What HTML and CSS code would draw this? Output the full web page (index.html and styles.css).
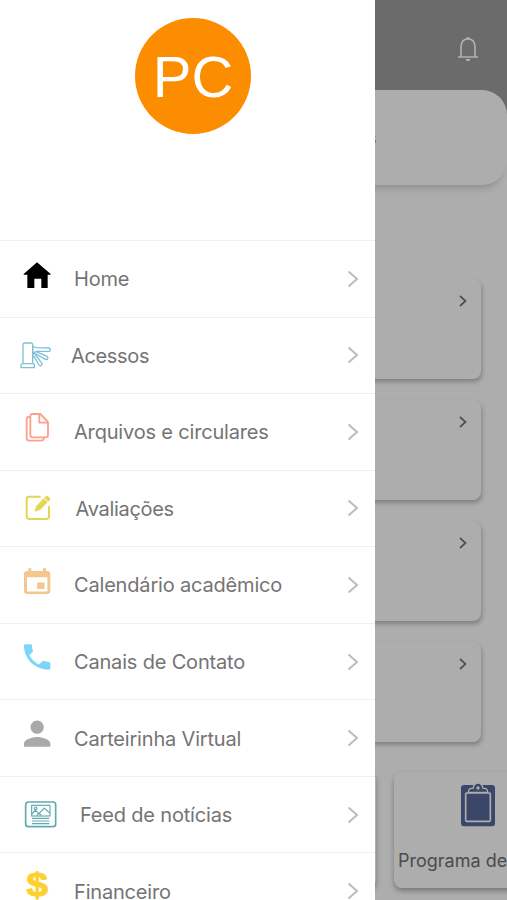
FILE: index.html
```
<!DOCTYPE html>
<html lang="pt-BR">
<head>
	<meta charset="UTF-8">
	<title>Menu</title>
	<link rel="stylesheet" href="styles.css">
</head>
<body>
	<main class="page">
		<header class="topbar">
			<svg class="bell" viewBox="0 0 66 78">
				<path d="M3 63H63M12 62V34C12 18 20 9 33 9S54 18 54 34V62"/>
				<path class="solid" d="M27 9a6 6 0 0 1 12 0zM26 69h14a7 7 0 0 1-14 0z"/>
			</svg>
		</header>
		<section class="welcome"><span>s</span></section>
		<section class="cards">
			<div class="card"><svg class="next" viewBox="0 0 8 12"><path d="M1 1l5.5 5L1 11"/></svg></div>
			<div class="card"><svg class="next" viewBox="0 0 8 12"><path d="M1 1l5.5 5L1 11"/></svg></div>
			<div class="card"><svg class="next" viewBox="0 0 8 12"><path d="M1 1l5.5 5L1 11"/></svg></div>
			<div class="card"><svg class="next" viewBox="0 0 8 12"><path d="M1 1l5.5 5L1 11"/></svg></div>
		</section>
		<section class="tiles">
			<div class="tile"></div>
			<div class="tile">
				<svg class="clipboard" viewBox="0 0 102 132">
					<rect class="board" x="0" y="6" width="102" height="124" rx="9"/>
					<rect class="sheet" x="14" y="30" width="74" height="85" rx="3"/>
					<path class="clip" d="M22 28q0-12 10-12h4Q39 0 51 0t15 16h4q10 0 10 12z"/>
					<circle class="hole" cx="51" cy="15" r="5"/>
				</svg>
				<span class="tile-name">Programa de</span>
			</div>
		</section>
	</main>

	<aside class="drawer">
		<div class="profile">
			<div class="avatar">PC</div>
		</div>
		<ul class="menu">
			<li>
				<svg class="icon" viewBox="0 0 108 108"><path d="M51 4L92 39V41H83V81H64V53H43V81H22V41H11V39z" fill="#000"/></svg>
				<a href="#">Home</a>
				<svg class="arrow" viewBox="0 0 12 18"><path d="M1.5 1.5l8.5 7.5-8.5 7.5"/></svg>
			</li>
			<li class="near">
				<svg class="icon" viewBox="0 0 108 108">
					<g fill="none" stroke="#7fc0d5" stroke-width="4" stroke-linejoin="round">
						<path d="M9 80V23q0-5 5-5h19q5 0 5 5V80zM8 80H38q5 0 5 5v7H3v-7q0-5 5-5z"/>
						<path d="M38 29l12 3 37 1q4 0 4 5t-4 5H50l-12 5z"/>
						<path d="M49 44l32 14q4 3 2 7t-7 2L43 48"/>
						<path d="M38 49l6 1 22 30q1 5-3 6t-6-2L42 58l-4 3z"/>
					</g>
				</svg>
				<a href="#">Acessos</a>
				<svg class="arrow" viewBox="0 0 12 18"><path d="M1.5 1.5l8.5 7.5-8.5 7.5"/></svg>
			</li>
			<li>
				<svg class="icon" viewBox="0 0 108 108">
					<g fill="none" stroke="#fba28d" stroke-width="5.5" stroke-linejoin="round">
						<path d="M38 0H61L84 24V63Q84 70 77 70H38Q31 70 31 63V7Q31 0 38 0z"/>
						<path d="M58 1V26H84M31 9H27Q20 9 20 16V72Q20 80 28 80H64Q71 80 72 71"/>
					</g>
				</svg>
				<a href="#">Arquivos e circulares</a>
				<svg class="arrow" viewBox="0 0 12 18"><path d="M1.5 1.5l8.5 7.5-8.5 7.5"/></svg>
			</li>
			<li class="mid">
				<svg class="icon" viewBox="0 0 108 108">
					<path d="M62 20H28Q20 20 20 28V79Q20 87 28 87H79Q87 87 87 79V48" fill="none" stroke="#e2d653" stroke-width="6"/>
					<path d="M44 65L48 49 71 25 83 37 60 60zM73 23l5-5q3-2 6 1l6 6q2 3 0 5l-5 5z" fill="#e2d653"/>
				</svg>
				<a href="#">Avaliações</a>
				<svg class="arrow" viewBox="0 0 12 18"><path d="M1.5 1.5l8.5 7.5-8.5 7.5"/></svg>
			</li>
			<li>
				<svg class="icon" viewBox="0 0 108 108"><path transform="translate(-1.2 .2) scale(4.39 3.85)" fill="#f5c68d" d="M17 12h-5v5h5v-5zM16 1v2H8V1H6v2H5c-1.11 0-1.99.9-1.99 2L3 19c0 1.1.89 2 2 2h14c1.1 0 2-.9 2-2V5c0-1.1-.9-2-2-2h-1V1h-2zm3 18H5V8h14v11z"/></svg>
				<a href="#">Calendário acadêmico</a>
				<svg class="arrow" viewBox="0 0 12 18"><path d="M1.5 1.5l8.5 7.5-8.5 7.5"/></svg>
			</li>
			<li>
				<svg class="icon" viewBox="0 0 108 108"><path transform="translate(-1.2 -11.7) scale(4.39 4.22)" fill="#7cd6f8" d="M6.62 10.79c1.44 2.83 3.76 5.14 6.59 6.59l2.2-2.2c.27-.27.67-.36 1.02-.24 1.12.37 2.33.57 3.57.57.55 0 1 .45 1 1V20c0 .55-.45 1-1 1-9.39 0-17-7.61-17-17 0-.55.45-1 1-1h3.5c.55 0 1 .45 1 1 0 1.25.2 2.45.57 3.57.11.35.03.74-.25 1.02l-2.2 2.2z"/></svg>
				<a href="#">Canais de Contato</a>
				<svg class="arrow" viewBox="0 0 12 18"><path d="M1.5 1.5l8.5 7.5-8.5 7.5"/></svg>
			</li>
			<li>
				<svg class="icon" viewBox="0 0 108 108"><path transform="translate(-7.8 -17.8) scale(4.94 4.9)" fill="#a9a9a9" d="M12 12c2.21 0 4-1.79 4-4s-1.79-4-4-4-4 1.79-4 4 1.79 4 4 4zm0 2c-2.67 0-8 1.34-8 4v2h16v-2c0-2.66-5.33-4-8-4z"/></svg>
				<a href="#">Carteirinha Virtual</a>
				<svg class="arrow" viewBox="0 0 12 18"><path d="M1.5 1.5l8.5 7.5-8.5 7.5"/></svg>
			</li>
			<li class="far">
				<svg class="icon" viewBox="0 0 108 108">
					<g fill="none" stroke="#62a9b2" stroke-width="3.5">
						<rect x="17" y="15" width="90" height="74" rx="8" stroke-width="5"/>
						<rect x="35" y="25" width="55" height="32"/>
						<path d="M35 51l11-11 10 10M50 56l23-23 17 16M57 48l7 7"/>
						<circle cx="47" cy="34" r="4"/>
						<path d="M36 64H88M36 72H88M36 80H88"/>
					</g>
				</svg>
				<a href="#">Feed de notícias</a>
				<svg class="arrow" viewBox="0 0 12 18"><path d="M1.5 1.5l8.5 7.5-8.5 7.5"/></svg>
			</li>
			<li>
				<svg class="icon" viewBox="0 0 108 108"><text class="money" transform="translate(52 70) scale(1.18 1)" text-anchor="middle">$</text></svg>
				<a href="#">Financeiro</a>
				<svg class="arrow" viewBox="0 0 12 18"><path d="M1.5 1.5l8.5 7.5-8.5 7.5"/></svg>
			</li>
		</ul>
	</aside>
</body>
</html>
```
FILE: styles.css
```
html, body, ul, li {
	margin: 0;
	padding: 0;
}
ul {
	list-style: none;
}
a {
	text-decoration: none;
}
body {
	position: relative;
	width: 507px;
	height: 900px;
	overflow: hidden;
	background: #6b6b6b;
	font-family: Inter, "Liberation Sans", sans-serif;
}

/* page under the drawer */
.page {
	display: flex;
	flex-direction: column;
	height: 900px;
	overflow: hidden;
	background: linear-gradient(#6b6b6b 130px, #adadad 130px);
}
.topbar {
	display: flex;
	justify-content: flex-end;
	box-sizing: border-box;
	height: 90px;
	padding: 36px 28px 0 0;
}
.bell {
	width: 22px;
	height: 26px;
	fill: none;
	stroke: #b0b0b0;
	stroke-width: 5;
}
.bell .solid {
	fill: #b0b0b0;
	stroke: none;
}
.welcome {
	display: flex;
	align-items: center;
	box-sizing: border-box;
	height: 95px;
	padding-left: 368px;
	border-radius: 0 25px 25px 0;
	background: #adadad;
	box-shadow: 0 8px 7px -5px rgba(0, 0, 0, .18);
	color: #555;
	font-size: 16px;
}
.cards {
	display: flex;
	flex-direction: column;
	gap: 21px;
	padding: 94px 26px 0;
}
.card {
	display: flex;
	justify-content: flex-end;
	box-sizing: border-box;
	height: 100px;
	padding: 16px 14px;
	border-radius: 8px;
	background: #adadad;
	box-shadow: 1px 3px 4px rgba(0, 0, 0, .25);
}
.next {
	width: 8px;
	height: 12px;
	fill: none;
	stroke: #505050;
	stroke-width: 1.7;
}
.tiles {
	display: flex;
	gap: 18px;
	padding: 30px 0 0 208px;
}
.tile {
	display: flex;
	flex: none;
	flex-direction: column;
	align-items: center;
	box-sizing: border-box;
	width: 168px;
	height: 116px;
	padding-top: 11px;
	border-radius: 8px;
	background: #adadad;
	box-shadow: 0 3px 5px rgba(0, 0, 0, .3);
}
.clipboard {
	width: 34px;
	height: 44px;
}
.board {
	fill: #3a4768;
}
.sheet {
	fill: #3a4768;
	stroke: #adadad;
	stroke-width: 5;
}
.clip {
	fill: #3a4768;
	stroke: #adadad;
	stroke-width: 4;
}
.hole {
	fill: #adadad;
}
.tile-name {
	align-self: flex-start;
	padding: 21px 0 0 4px;
	color: #4b4b4b;
	font-size: 18px;
	line-height: 26px;
	white-space: nowrap;
}

/* side menu */
.drawer {
	position: absolute;
	top: 0;
	left: 0;
	width: 375px;
	height: 900px;
	overflow: hidden;
	background: #fff;
}
.profile {
	display: flex;
	justify-content: center;
	box-sizing: border-box;
	height: 240px;
	padding: 18px 0 0 11px;
}
.avatar {
	width: 116px;
	height: 116px;
	border-radius: 50%;
	background: #fc8d00;
	color: #fff;
	font-family: "Liberation Sans", Arial, sans-serif;
	font-size: 58px;
	line-height: 117px;
	text-align: center;
}
.menu li {
	display: flex;
	align-items: center;
	box-sizing: border-box;
	height: 76.56px;
	padding: 0 16px 0 20px;
	border-top: 1.5px solid #efefef;
}
.icon {
	flex: none;
	width: 36px;
	height: 36px;
	overflow: visible;
}
.menu a {
	flex: 1;
	padding: 1px 0 0 18px;
	color: #747474;
	font-size: 20px;
	letter-spacing: -.18px;
	line-height: 26px;
	white-space: nowrap;
}
.menu .near a {
	padding-left: 15px;
	letter-spacing: -.35px;
}
.menu .mid a {
	padding-left: 19.5px;
	letter-spacing: -.3px;
}
.menu .far a {
	padding-left: 24px;
}
.arrow {
	flex: none;
	width: 12px;
	height: 18px;
	fill: none;
	stroke: #bcbcbc;
	stroke-width: 2;
}
.money {
	fill: #fcd12f;
	stroke: #fcd12f;
	stroke-width: 3;
	stroke-linejoin: round;
	font: bold 98px "Liberation Sans", Arial, sans-serif;
}
```
